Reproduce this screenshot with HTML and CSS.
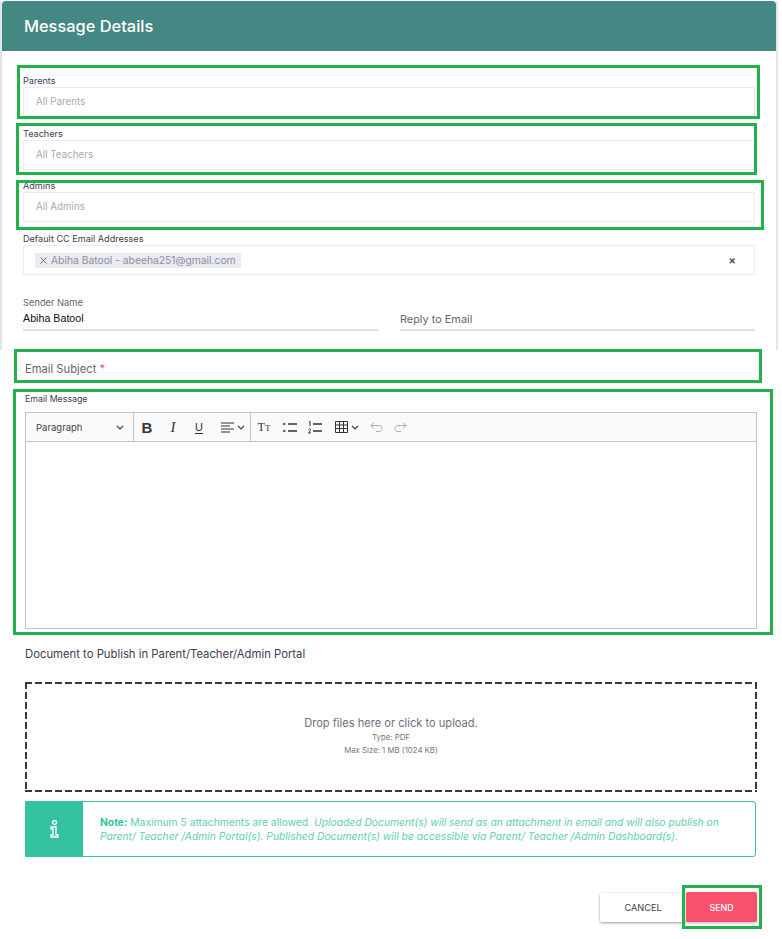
FILE: index.html
```html
<!DOCTYPE html>
<html lang="en">
<head>
    <meta charset="UTF-8">
    <title>Message Details</title>
    <link rel="stylesheet" href="styles.css">
</head>
<body>
    <div class="page">
        <div class="card">
            <div class="card-header">Message Details</div>
            <div class="card-body">
                <div class="field">
                    <label class="field-label">Parents</label>
                    <div class="select-box">All Parents</div>
                </div>
                <div class="field">
                    <label class="field-label">Teachers</label>
                    <div class="select-box">All Teachers</div>
                </div>
                <div class="field field-admins">
                    <label class="field-label">Admins</label>
                    <div class="select-box">All Admins</div>
                </div>
                <div class="field">
                    <label class="field-label">Default CC Email Addresses</label>
                    <div class="select-box select-tags">
                        <span class="chip">
                            <svg class="chip-x" width="7" height="7" viewBox="0 0 7 7"><path d="M.5.500l6 6M6.500.5l-6 6"/></svg>
                            Abiha Batool - abeeha251@gmail.com
                        </span>
                        <span class="clear-x">&times;</span>
                    </div>
                </div>
                <div class="two-col">
                    <div class="line-field">
                        <label class="line-label">Sender Name</label>
                        <div class="line-value">Abiha Batool</div>
                    </div>
                    <div class="line-field">
                        <div class="line-placeholder">Reply to Email</div>
                    </div>
                </div>
            </div>
        </div>

        <div class="lower">
            <div class="subject">Email Subject <span class="req">*</span></div>

            <div class="message-label">Email Message</div>
            <div class="editor">
                <div class="toolbar">
                    <div class="tb-group tb-heading">
                        <span>Paragraph</span>
                        <svg class="chev" width="8" height="5" viewBox="0 0 8 5"><path d="M1 1l3 3 3-3"/></svg>
                    </div>
                    <div class="tb-group">
                        <span class="tb-btn tb-bold">B</span>
                        <span class="tb-btn tb-italic">I</span>
                        <span class="tb-btn"><span class="tb-under">U</span></span>
                        <span class="tb-btn tb-wide">
                            <svg width="13" height="11" viewBox="0 0 13 11"><path class="ico" d="M0 1h13M0 4h9M0 7h13M0 10h9"/></svg>
                            <svg class="chev" width="8" height="5" viewBox="0 0 8 5"><path d="M1 1l3 3 3-3"/></svg>
                        </span>
                    </div>
                    <div class="tb-group tb-last">
                        <span class="tb-btn tb-serif">T<small>T</small></span>
                        <span class="tb-btn tb-list">
                            <svg width="14" height="11" viewBox="0 0 14 11"><path class="ico-b" d="M0 2h2.400M0 9h2.400M5 2h9M5 9h9"/></svg>
                        </span>
                        <span class="tb-btn tb-list">
                            <svg width="14" height="13" viewBox="0 0 14 13"><path class="ico-b" d="M5 3h9M5 10h9"/><path class="ico" d="M1 1l1-.5V5M.5 8.500c1-1 2.500-.5 2 .8L.5 12h2.500"/></svg>
                        </span>
                        <span class="tb-btn tb-table">
                            <svg width="13" height="12" viewBox="0 0 13 12"><path class="ico" d="M.5.500h12v11H.5zM.5 4h12M.5 7.500h12M4.500.5v11M8.500.5v11"/></svg>
                            <svg class="chev" width="8" height="5" viewBox="0 0 8 5"><path d="M1 1l3 3 3-3"/></svg>
                        </span>
                        <span class="tb-btn tb-hist">
                            <svg width="13" height="10" viewBox="0 0 13 10"><path class="ico-lt" d="M4 .5L1 3.500l3 3M1 3.500h8c4 0 4 6 0 6H6"/></svg>
                        </span>
                        <span class="tb-btn tb-hist">
                            <svg width="13" height="10" viewBox="0 0 13 10"><path class="ico-lt" d="M9 .5l3 3-3 3M12 3.500H4c-4 0-4 6 0 6h3"/></svg>
                        </span>
                    </div>
                </div>
                <div class="editor-body"></div>
            </div>

            <div class="doc-label">Document to Publish in Parent/Teacher/Admin Portal</div>
            <div class="dropzone">
                <div class="drop-title">Drop files here or click to upload.</div>
                <div class="drop-sub">Type: PDF</div>
                <div class="drop-sub">Max Size: 1 MB (1024 KB)</div>
            </div>

            <div class="note">
                <div class="note-icon">
                    <svg width="10" height="18" viewBox="0 0 10 18"><circle cx="4.500" cy="2.500" r="2"/><path d="M1 7h5v8h2v2H1v-2h2V9H1z"/></svg>
                </div>
                <div class="note-text"><b>Note:</b> Maximum 5 attachments are allowed. <i>Uploaded Document(s) will send as an attachment in email and will also publish on Parent/ Teacher /Admin Portal(s). Published Document(s) will be accessible via Parent/ Teacher /Admin Dashboard(s).</i></div>
            </div>

            <div class="actions">
                <button class="btn btn-cancel">CANCEL</button>
                <button class="btn btn-send">SEND</button>
            </div>
        </div>

        <!-- green review boxes drawn on top of the form -->
        <div class="mark mark-parents"></div>
        <div class="mark mark-teachers"></div>
        <div class="mark mark-admins"></div>
        <div class="mark mark-subject"></div>
        <div class="mark mark-message"></div>
        <div class="mark mark-send"></div>
    </div>
</body>
</html>
```

FILE: styles.css
```css
body {
    margin: 0;
    background: #fff;
    font-family: Inter, "Open Sans", sans-serif;
    color: #3f4254;
}
.page {
    position: relative;
    width: 782px;
    height: 939px;
    overflow: hidden;
}
.card {
    width: 774px;
    margin-top: 1px;
    border-left: 2px solid #e4e5ec;
    border-right: 2px solid #e4e5ec;
}
.card-header {
    height: 50px;
    line-height: 50px;
    padding-left: 22px;
    background: #438882;
    border-top-right-radius: 4px;
    border-top-left-radius: 4px;
    color: #fff;
    font-size: 16.400px;
    font-weight: 500;
}
.card-body {
    padding: 23px 21px 19px 21px;
}
.field {
    margin-bottom: 10px;
}
.field-admins {
    margin-top: -1px;
}
.field-label {
    display: block;
    height: 13px;
    line-height: 14px;
    font-size: 9.100px;
    color: #3f3a55;
}
.select-box {
    box-sizing: border-box;
    height: 30px;
    line-height: 27px;
    padding-left: 12px;
    border: 1px solid #ebecf1;
    font-size: 9.800px;
    color: #a9a9ae;
}
.select-tags {
    display: flex;
    align-items: center;
    justify-content: space-between;
    padding-left: 11px;
    padding-right: 18px;
}
.chip {
    display: flex;
    align-items: center;
    gap: 4px;
    height: 15px;
    line-height: 15px;
    padding: 0 5px;
    background: #e9eaf2;
    color: #8d8f9c;
    font-size: 10.300px;
}
.chip-x path {
    fill: none;
    stroke: #6e7080;
    stroke-width: 1;
}
.clear-x {
    font-size: 11px;
    font-weight: 700;
    color: #555;
}
.two-col {
    display: flex;
    gap: 22px;
    margin-top: 22px;
}
.line-field {
    box-sizing: border-box;
    width: 355px;
    height: 34px;
    border-bottom: 2px solid #e0e0e0;
}
.line-label {
    display: block;
    height: 13px;
    line-height: 12px;
    font-size: 9.300px;
    color: #666;
}
.line-value {
    height: 18px;
    line-height: 16px;
    font-family: "Liberation Sans", Arial, sans-serif;
    font-size: 10.700px;
    color: #111;
}
.line-placeholder {
    padding-top: 14px;
    line-height: 16px;
    font-size: 10.900px;
    color: #666;
}
.lower {
    width: 732px;
    padding-left: 25px;
}
.subject {
    margin-top: 10px;
    height: 18px;
    line-height: 18px;
    font-size: 11.200px;
    color: #666;
}
.req {
    color: #f8516e;
}
.message-label {
    margin-top: 14px;
    height: 13px;
    line-height: 13px;
    font-size: 8.800px;
    color: #3f3a55;
}
.editor {
    box-sizing: border-box;
    height: 217px;
    margin-top: 7px;
    border: 1px solid #c4c4c4;
}
.toolbar {
    display: flex;
    height: 28px;
    background: #fafafa;
    border-bottom: 1px solid #c4c4c4;
}
.tb-group {
    display: flex;
    align-items: center;
    border-right: 1px solid #c4c4c4;
}
.tb-last {
    border-right: none;
}
.tb-heading {
    box-sizing: border-box;
    width: 108px;
    justify-content: space-between;
    padding: 0 9px 0 10px;
    font-size: 9.500px;
    color: #444;
}
.tb-btn {
    display: flex;
    align-items: center;
    justify-content: center;
    gap: 3px;
    width: 26px;
    color: #333;
}
.tb-bold {
    font-family: "Liberation Sans", Arial, sans-serif;
    font-size: 15px;
    font-weight: 700;
}
.tb-italic {
    font-family: "Liberation Serif", serif;
    font-size: 15px;
    font-style: italic;
}
.tb-under {
    font-family: "Liberation Sans", Arial, sans-serif;
    font-size: 11px;
    line-height: 12px;
    border-bottom: 1px solid #333;
}
.tb-wide {
    box-sizing: border-box;
    width: 38px;
    padding-left: 4px;
}
.tb-serif {
    font-family: "Liberation Serif", serif;
    font-size: 12px;
    align-items: baseline;
}
.tb-serif small {
    margin-left: -3px;
    font-size: 9px;
}
.tb-list {
    width: 25px;
}
.tb-table {
    width: 37px;
    box-sizing: border-box;
    padding-left: 3px;
}
.tb-hist {
    width: 24px;
}
.chev path {
    fill: none;
    stroke: #444;
    stroke-width: 1.200;
}
.ico {
    fill: none;
    stroke: #333;
    stroke-width: 1;
}
.ico-b {
    fill: none;
    stroke: #333;
    stroke-width: 1.600;
}
.ico-lt {
    fill: none;
    stroke: #aaa;
    stroke-width: 1;
}
.doc-label {
    margin-top: 17px;
    height: 16px;
    line-height: 16px;
    font-size: 11.300px;
    color: #3f3a55;
}
.dropzone {
    box-sizing: border-box;
    height: 110px;
    margin-top: 20px;
    padding-top: 34px;
    background:
        linear-gradient(to right, #2f3a4c 7px, transparent 7px) top left / 10px 2px repeat-x,
        linear-gradient(to right, #2f3a4c 7px, transparent 7px) bottom left / 10px 2px repeat-x,
        linear-gradient(to bottom, #2f3a4c 7px, transparent 7px) top left / 2px 10px repeat-y,
        linear-gradient(to bottom, #2f3a4c 7px, transparent 7px) top right / 2px 10px repeat-y;
    text-align: center;
    color: #777;
}
.drop-title {
    height: 15px;
    line-height: 15px;
    font-size: 11.100px;
    color: #6c7080;
}
.drop-sub {
    height: 13px;
    line-height: 13px;
    font-size: 7.800px;
}
.note {
    box-sizing: border-box;
    display: flex;
    width: 731px;
    height: 56px;
    margin-top: 9px;
    border: 1px solid #35c2a0;
    border-radius: 0 3px 3px 0;
}
.note-icon {
    flex: none;
    display: flex;
    align-items: center;
    justify-content: center;
    width: 57px;
    background: #35c2a0;
}
.note-icon svg {
    fill: none;
    stroke: #fff;
    stroke-width: 1.300;
}
.note-text {
    align-self: center;
    padding: 0 30px 0 17px;
    line-height: 14px;
    font-size: 10.300px;
    color: #62cdb4;
}
.note-text b {
    color: #35c2a0;
}
.actions {
    display: flex;
    justify-content: flex-end;
    align-items: flex-end;
    height: 30px;
    margin-top: 35px;
}
.btn {
    border: none;
    border-radius: 2px;
    font-family: inherit;
}
.btn-cancel {
    width: 86px;
    height: 29px;
    background: #fff;
    color: #444;
    font-size: 9.200px;
    box-shadow: 0 1px 3px rgba(0, 0, 0, 0.4);
}
.btn-send {
    width: 71px;
    height: 30px;
    background: #f8516e;
    color: #fff;
    font-size: 8.800px;
    font-weight: 500;
    box-shadow: 0 1px 3px rgba(0, 0, 0, 0.3);
}
.mark {
    position: absolute;
    box-sizing: border-box;
    border: 3px solid #22b14c;
}
.mark-parents {
    left: 17px;
    top: 65px;
    width: 743px;
    height: 54px;
}
.mark-teachers {
    left: 16px;
    top: 123px;
    width: 741px;
    height: 52px;
}
.mark-admins {
    left: 16px;
    top: 180px;
    width: 748px;
    height: 50px;
}
.mark-subject {
    left: 14px;
    top: 349px;
    width: 748px;
    height: 34px;
}
.mark-message {
    left: 13px;
    top: 389px;
    width: 760px;
    height: 246px;
}
.mark-send {
    left: 682px;
    top: 885px;
    width: 80px;
    height: 44px;
}
```
